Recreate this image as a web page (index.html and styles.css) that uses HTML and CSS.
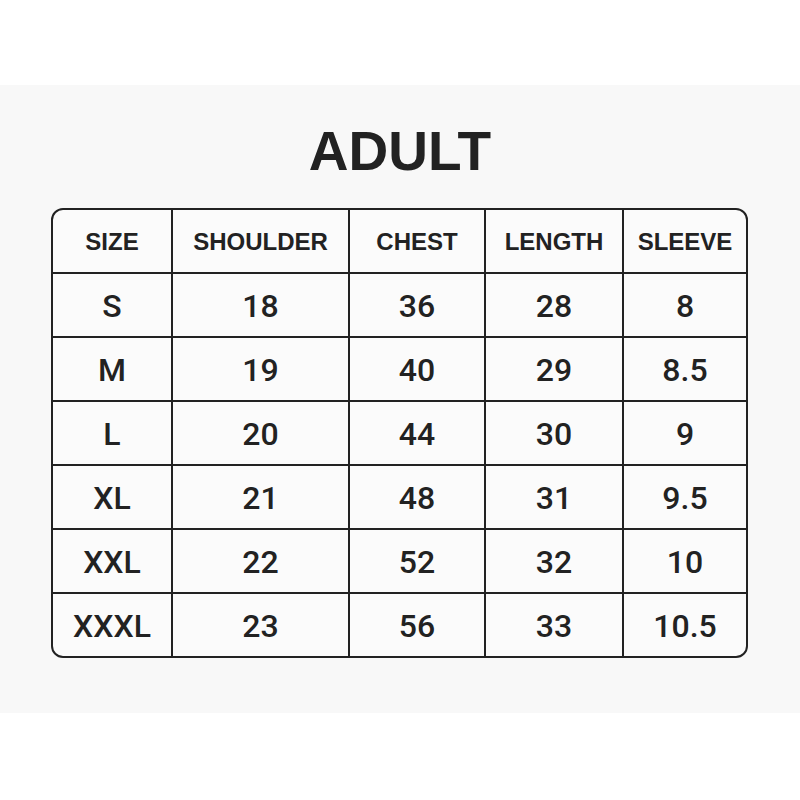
FILE: index.html
```html
<!DOCTYPE html>
<html>
<head>
<meta charset="utf-8">
<link rel="stylesheet" href="styles.css">
</head>
<body>
<div class="page">
  <div class="panel">
    <h1 class="title">ADULT</h1>
    <div class="chart">
      <div class="row head">
        <div class="cell c1">SIZE</div>
        <div class="cell c2">SHOULDER</div>
        <div class="cell c3">CHEST</div>
        <div class="cell c4">LENGTH</div>
        <div class="cell c5">SLEEVE</div>
      </div>
      <div class="row">
        <div class="cell c1">S</div><div class="cell c2">18</div><div class="cell c3">36</div><div class="cell c4">28</div><div class="cell c5">8</div>
      </div>
      <div class="row">
        <div class="cell c1">M</div><div class="cell c2">19</div><div class="cell c3">40</div><div class="cell c4">29</div><div class="cell c5">8.5</div>
      </div>
      <div class="row">
        <div class="cell c1">L</div><div class="cell c2">20</div><div class="cell c3">44</div><div class="cell c4">30</div><div class="cell c5">9</div>
      </div>
      <div class="row">
        <div class="cell c1">XL</div><div class="cell c2">21</div><div class="cell c3">48</div><div class="cell c4">31</div><div class="cell c5">9.5</div>
      </div>
      <div class="row">
        <div class="cell c1">XXL</div><div class="cell c2">22</div><div class="cell c3">52</div><div class="cell c4">32</div><div class="cell c5">10</div>
      </div>
      <div class="row last">
        <div class="cell c1">XXXL</div><div class="cell c2">23</div><div class="cell c3">56</div><div class="cell c4">33</div><div class="cell c5">10.5</div>
      </div>
    </div>
  </div>
</div>
</body>
</html>
```
FILE: styles.css
```css
html, body {
  margin: 0;
  padding: 0;
  background: #ffffff;
}
.page {
  width: 800px;
  height: 800px;
  padding-top: 85px;
  box-sizing: border-box;
  font-family: "Liberation Sans", Arial, sans-serif;
  color: #222222;
}
.panel {
  height: 628px;
  background: #f8f8f8;
  box-sizing: border-box;
  padding-top: 36px;
}
.title {
  margin: 0;
  height: 87px;
  line-height: 60px;
  font-size: 55px;
  font-weight: 700;
  text-align: center;
}
.chart {
  margin-left: 51px;
  width: 697px;
  height: 450px;
  box-sizing: border-box;
  border: 2px solid #222222;
  border-radius: 12px;
  overflow: hidden;
  background: #fbfbfb;
}
.row {
  display: flex;
  height: 64px;
  box-sizing: border-box;
  border-bottom: 2px solid #222222;
}
.row.last {
  height: 62px;
  border-bottom: none;
}
.cell {
  display: flex;
  align-items: center;
  justify-content: center;
  box-sizing: border-box;
  border-right: 2px solid #222222;
  font-family: Roboto, "Liberation Sans", sans-serif;
  font-size: 32px;
  font-weight: 500;
  padding-top: 2px;
}
.c1 { width: 120px; }
.c2 { width: 177px; }
.c3 { width: 136px; }
.c4 { width: 138px; }
.c5 { width: 122px; border-right: none; }
.head .cell {
  font-family: "Liberation Sans", Arial, sans-serif;
  font-size: 24px;
  font-weight: 700;
}
```
